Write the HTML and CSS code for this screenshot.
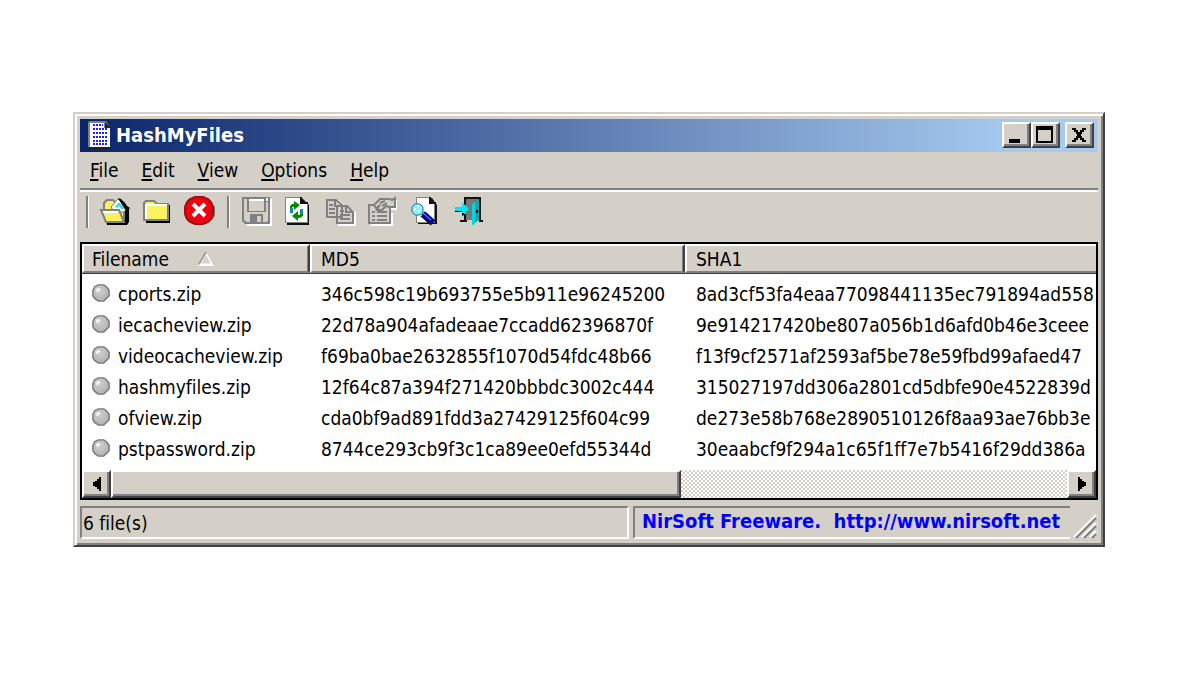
FILE: index.html
```html
<!DOCTYPE html>
<html lang="en">
<head>
<meta charset="utf-8">
<title>HashMyFiles</title>
<link rel="stylesheet" href="styles.css">
</head>
<body>
<svg class="defs" aria-hidden="true">
  <defs>
    <pattern id="gold" width="4" height="4" patternUnits="userSpaceOnUse"><path fill="#ffff30" d="M0 0h4v4H0z"/><path fill="#f0e890" d="M0 0h2v2H0zM2 2h2v2H2z"/></pattern>
    <radialGradient id="ball" cx=".4" cy=".35" r=".7"><stop offset="0" stop-color="#d0d0d0"/><stop offset="1" stop-color="#b0b0b0"/></radialGradient>
    <symbol id="dot" viewBox="0 0 20 20"><path fill="url(#ball)" stroke="#777" stroke-width="1.6" d="M7 1h6l3 2 3 4v6l-3 3-3 3H7l-4-3-2-3V7l2-4z"/><path fill="#fff" d="M5 5h4v2H7v2H5z"/></symbol>
  </defs>
</svg>
<main class="window">
  <header class="titlebar">
    <svg class="app-icon" viewBox="0 0 24 28">
      <path fill="#222" d="M2 2h18l2 5v21H2z"/><path fill="#808080" d="M0 1l2-1h16l4 6v20H0z"/><path fill="#fff" d="M2 2h14v5h6v19H2z"/><path fill="#222" d="M17 1l6 6h-6z"/>
      <path d="M5 4h10M5 8h14M5 12h14M5 16h14M5 20h14M5 23h14" stroke="#2020f0" stroke-width="2" stroke-dasharray="2 1"/>
    </svg>
    <h1 class="title">HashMyFiles</h1>
    <div class="controls">
      <button class="ctl" aria-label="Minimize"><svg viewBox="0 0 24 20"><path d="M5 14h11v4H5z"/></svg></button>
      <button class="ctl" aria-label="Maximize"><svg viewBox="0 0 24 20"><path fill-rule="evenodd" d="M3 1h17v17H3zM5 5v11h13V5z"/></svg></button>
      <button class="ctl close" aria-label="Close"><svg viewBox="0 0 24 20"><path d="M5 3h4v2h2v2h2V5h2V3h4v2h-2v2h-2v2h-1v2h1v2h2v2h2v2h-4v-2h-2v-2h-2v2H9v2H5v-2h2v-2h2v-2h1V9H9V7H7V5H5z"/></svg></button>
    </div>
  </header>
  <nav class="menu">
    <button><u>F</u>ile</button><button><u>E</u>dit</button><button><u>V</u>iew</button><button><u>O</u>ptions</button><button><u>H</u>elp</button>
  </nav>
  <div class="toolbar">
    <span class="sep"></span>
    <button aria-label="Open files"><svg viewBox="0 0 28 30">
      <path d="M5 24h19V12h4v14l-2 3H6z"/><path fill="url(#gold)" stroke="#808080" stroke-width="2" d="M3 16V7l3-3h6l3 3h8v16z"/>
      <path fill="#fff" stroke="#777" d="M10 11l7-8 9 9-3 4H13z"/><path d="M17 2l3 1 4 4 2 3 3 2-3 4-3-4-3-5z"/><path fill="#30dfe8" d="M14 11l4-5 5 6-2 2-3-4-2 2z"/>
      <path fill="url(#gold)" stroke="#808080" stroke-width="2" d="M0 14h18l5 12H5z"/><path stroke="#fff" stroke-width="2" d="M2 16h15" fill="none"/></svg></button>
    <button aria-label="Open folder"><svg viewBox="0 0 28 30"><path d="M3 9h24v18H3z"/><path fill="url(#gold)" stroke="#808080" stroke-width="2" d="M1 24V7l2-2h8l3 3h11v16z"/><path fill="none" stroke="#fff" stroke-width="2" d="M3 23V9h21"/></svg></button>
    <button aria-label="Stop"><svg viewBox="0 0 28 30"><path fill="#77736e" d="M12 3h10l4 3 4 5v9l-4 5-5 3h-9l-5-4z"/><path fill="#f00010" stroke="#a01010" stroke-width="2" d="M10 1h8l5 2 3 3 2 5v7l-2 5-3 3-5 2h-8l-5-2-3-3-2-5v-7l2-5 3-3z"/><path stroke="#fff" stroke-width="4" d="M8 8l12 12M20 8L8 20"/></svg></button>
    <span class="sep second"></span>
    <button aria-label="Save"><svg viewBox="0 0 28 30"><path fill="#fff" d="M3 3h27v27H5z"/><path fill="#808080" d="M0 1h28v27H3l-3-3z"/><path fill="#d4d0c8" d="M2 3h3v22H3l-1-1zM7 3h15v12H7zM24 6h2v19h-3v-7H5v-2h19z"/><path fill="#fff" d="M7 3h15v2H7zM24 2h2v3h-2z"/><path fill="#d4d0c8" d="M4 18h4v8H4zM15 20h4v6h-4zM21 18h4v8h-4z"/></svg></button>
    <button aria-label="Refresh"><svg viewBox="0 0 28 30"><path fill="#111" d="M3 2h15l7 7v20H3z"/><path fill="#fff" stroke="#808080" d="M1.500 1.500h15v6h7v19h-22z"/><path fill="none" stroke="#111" stroke-width="2" d="M17 1v6h7"/><path fill="#008a00" d="M10 8V5l6 4-6 5v-3H8v2H6v-3l2-2zM14 22v-3h2v-2h3v3l-3 2h-2v3l-6-5 6-5z"/><path fill="#16899a" d="M6 12h3v5H6zM16 13h3v5h-3z"/></svg></button>
    <button aria-label="Copy"><svg viewBox="0 0 28 30"><g fill="none" stroke="#fff" stroke-width="2"><path d="M2 23V5h10l5 4v4M13 29V12h10l6 5v12z"/></g><g fill="#d4d0c8" stroke="#808080" stroke-width="2"><path d="M1 21V4h9l6 5v12zM11 27V10h10l6 6v11z"/></g><path fill="none" stroke="#808080" stroke-width="2" d="M9 4v6h6M3 9h4M3 13h6M3 17h6M20 10v6h6M14 15h4M14 19h10M14 23h10"/></svg></button>
    <button aria-label="Properties"><svg viewBox="0 0 28 30"><path fill="none" stroke="#fff" stroke-width="2" d="M3 29h21V17M28 4v9h-5"/><path fill="#d4d0c8" stroke="#808080" stroke-width="2" d="M1 9h21v18H1z"/><path fill="none" stroke="#808080" stroke-width="2" d="M4 16h3M9 16h10M4 20h3M9 20h10M4 24h3M9 24h10"/><path fill="#d4d0c8" stroke="#808080" stroke-width="2" d="M6 9l6-6h10l2 1 3-2v9h-6l-3-1-4 4H9l2-4-3 2z"/><path stroke="#808080" stroke-width="2" d="M12 7l5-2M14 10l5-3"/></svg></button>
    <button aria-label="Find"><svg class="shift" viewBox="0 0 28 30"><path fill="#111" d="M6 2h14l5 7v19H6z"/><path fill="#fff" stroke="#808080" d="M4.500 1.500h13v6h5v19h-18z"/><path fill="none" stroke="#111" stroke-width="2" d="M18 1v6h6"/><path stroke="#111" stroke-width="7" d="M11 18l10 9"/><path stroke="#0000e8" stroke-width="4" d="M11 17l10 9"/><path stroke="#65c9ff" d="M11 17l8 7"/><path fill="#8ff0f4" stroke="#187988" d="M3 8h5l3 3v5l-3 3H3l-3-3v-5z"/><path stroke="#fff" stroke-width="2" d="M2 13h2M5 10h2M6 15h2"/></svg></button>
    <button aria-label="Exit"><svg class="shift" viewBox="0 0 28 30"><path fill="#777" d="M10 2h15v22H10z"/><path fill="none" stroke="#111" stroke-width="2" d="M10 9V2h15v23h3M5 25h7M10 25v-7"/><path fill="#15a5ab" d="M17 8l7-5v21l-7 5z"/><path fill="#00d8df" d="M17 8l3-2v22l-3 1z"/><path d="M21 14h2v3h-2z"/><path fill="#00e8ed" d="M0 11h7V6l7 7-7 7v-5H0z"/><path d="M0 15h7v5l2-1v-2H7v-1H0z"/></svg></button>
  </div>
  <section class="list">
    <div class="viewport">
    <table>
      <colgroup><col class="c-name"><col class="c-md5"><col></colgroup>
      <thead><tr><th>Filename<svg class="sort" viewBox="0 0 18 16"><path fill="#fff" d="M9 0l9 16H0z"/><path fill="#d4d0c8" d="M9 3l5 10H4z"/><path fill="none" stroke="#999" stroke-width="2" d="M9 0L1 14"/></svg></th><th>MD5</th><th>SHA1</th></tr></thead>
      <tbody>
        <tr><td><svg class="dot"><use href="#dot"/></svg>cports.zip</td><td>346c598c19b693755e5b911e96245200</td><td>8ad3cf53fa4eaa77098441135ec791894ad558</td></tr>
        <tr><td><svg class="dot"><use href="#dot"/></svg>iecacheview.zip</td><td>22d78a904afadeaae7ccadd62396870f</td><td>9e914217420be807a056b1d6afd0b46e3ceee</td></tr>
        <tr><td><svg class="dot"><use href="#dot"/></svg>videocacheview.zip</td><td>f69ba0bae2632855f1070d54fdc48b66</td><td>f13f9cf2571af2593af5be78e59fbd99afaed47</td></tr>
        <tr><td><svg class="dot"><use href="#dot"/></svg>hashmyfiles.zip</td><td>12f64c87a394f271420bbbdc3002c444</td><td>315027197dd306a2801cd5dbfe90e4522839d</td></tr>
        <tr><td><svg class="dot"><use href="#dot"/></svg>ofview.zip</td><td>cda0bf9ad891fdd3a27429125f604c99</td><td>de273e58b768e2890510126f8aa93ae76bb3e</td></tr>
        <tr><td><svg class="dot"><use href="#dot"/></svg>pstpassword.zip</td><td>8744ce293cb9f3c1ca89ee0efd55344d</td><td>30eaabcf9f294a1c65f1ff7e7b5416f29dd386a</td></tr>
      </tbody>
    </table>
    </div>
    <div class="scrollbar">
      <button aria-label="Scroll left"><svg viewBox="0 0 8 14"><path d="M8 0v14H6v-2H4v-2H2V9H0V5h2V4h2V2h2V0z"/></svg></button>
      <div class="track"><div class="thumb"></div></div>
      <button aria-label="Scroll right"><svg viewBox="0 0 8 14"><path d="M0 0v14h2v-2h2v-2h2V9h2V5H6V4H4V2H2V0z"/></svg></button>
    </div>
  </section>
  <footer class="status">
    <div class="pane count">6 file(s)</div>
    <div class="pane credit"><a href="#">NirSoft Freeware.&nbsp; http://www.nirsoft.net</a></div>
    <svg class="grip" viewBox="0 0 24 24"><path stroke="#fff" stroke-width="2" d="M0 22L22 0M8 22L22 8M16 22l6-6"/><path stroke="#808080" stroke-width="2" d="M2 23L22 3M10 23l12-12M18 23l4-4"/></svg>
  </footer>
</main>
</body>
</html>
```
FILE: styles.css
```css
* { box-sizing: border-box; }
body {
  margin: 0;
  padding: 112px 95px 0 73px;
  background: #fff;
  font: 19px/24px "DejaVu Sans Condensed", "DejaVu Sans", sans-serif;
  font-variant-ligatures: none;
  color: #000;
}
button { font: inherit; color: inherit; background: #d4d0c8; border: 0; padding: 0; }
svg { display: block; overflow: visible; fill: #000; }
.defs { position: absolute; width: 0; height: 0; }
.window {
  background: #d4d0c8;
  border: 2px solid;
  border-color: #d4d0c8 #404040 #404040 #d4d0c8;
  box-shadow: inset 2px 2px #fff, inset -2px -2px #808080;
  padding: 5px;
}
.titlebar {
  display: flex;
  align-items: center;
  height: 33px;
  padding: 0 4px 2px 8px;
  background: linear-gradient(90deg, #0a246a, #a6caf0 92%);
}
.app-icon { width: 24px; height: 28px; }
.title { margin: 0 auto 0 4px; color: #fff; font-size: 20px; line-height: 24px; font-weight: bold; }
.controls { display: flex; }
.ctl, .scrollbar button, .thumb {
  border: 2px solid;
  border-color: #fff #404040 #404040 #fff;
  box-shadow: inset -2px -2px #808080;
  background: #d4d0c8;
}
.ctl { width: 29px; height: 26px; }
.ctl svg { width: 24px; height: 20px; }
.ctl.close { margin-left: 5px; }
.menu { display: flex; gap: 23px; height: 36px; padding: 0 10px; align-items: center; }
.menu u { text-decoration-thickness: 2px; text-underline-offset: 2px; text-decoration-skip-ink: none; }
.toolbar {
  display: flex;
  align-items: flex-start;
  gap: 14px;
  height: 54px;
  padding: 6px;
  border-top: 2px solid #808080;
  box-shadow: inset 0 2px #fff;
}
.toolbar svg { width: 28px; height: 30px; }
.toolbar svg.shift { margin-left: 2px; margin-right: -1px; }
.sep { width: 3px; height: 32px; border-left: 2px solid #808080; border-right: 1px solid #fff; margin-right: -2px; }
.sep.second { margin: 0 -2px 0 0; }
.list { border: 2px solid #000; background: #fff; }
.viewport { overflow: hidden; height: 226px; }
table { width: 100%; table-layout: fixed; border-spacing: 0; }
.c-name { width: 228px; }
.c-md5 { width: 375px; }
th {
  height: 29px;
  padding: 1px 0 0 8px;
  text-align: left;
  font-weight: normal;
  background: #d4d0c8;
  border: 2px solid;
  border-color: #fff #404040 #808080 #fff;
  box-shadow: inset -1px 0 #808080, 0 1px #404040;
  line-height: 24px;
}
th:last-child { border-right: 0; box-shadow: 0 1px #404040; }
th + th, td + td { padding-left: 9px; }
.sort { display: inline-block; width: 18px; height: 14px; margin-left: 28px; }
tbody::before { content: ""; display: block; height: 6px; }
td { height: 31px; padding: 0 0 0 10px; white-space: nowrap; line-height: 31px; }
td + td { padding-left: 11px; }
.dot { float: left; width: 18px; height: 18px; margin: 5px 8px 0 0; }
.scrollbar { display: flex; height: 28px; background: #d4d0c8; }
.scrollbar button { width: 29px; display: grid; place-items: center; }
.scrollbar svg { width: 8px; height: 14px; }
.track { flex: 1; background: repeating-conic-gradient(#d4d0c8 0 25%, #fff 0 50%) 0 0 / 4px 4px; }
.thumb { width: 59.6%; height: 28px; }
.status { display: flex; align-items: flex-start; gap: 4px; padding-top: 6px; height: 40px; }
.pane {
  height: 33px;
  border: 2px solid;
  border-color: #808080 #fff #fff #808080;
  line-height: 31px;
  white-space: nowrap;
}
.count { flex: 1; padding-left: 1px; }
.credit { width: 437px; padding-left: 7px; border-right: 0; font-size: 20px; font-weight: bold; line-height: 27px; }
.credit a { color: #0000ff; text-decoration: none; }
.grip { width: 24px; height: 24px; margin: 9px 0 0 0; }
```
